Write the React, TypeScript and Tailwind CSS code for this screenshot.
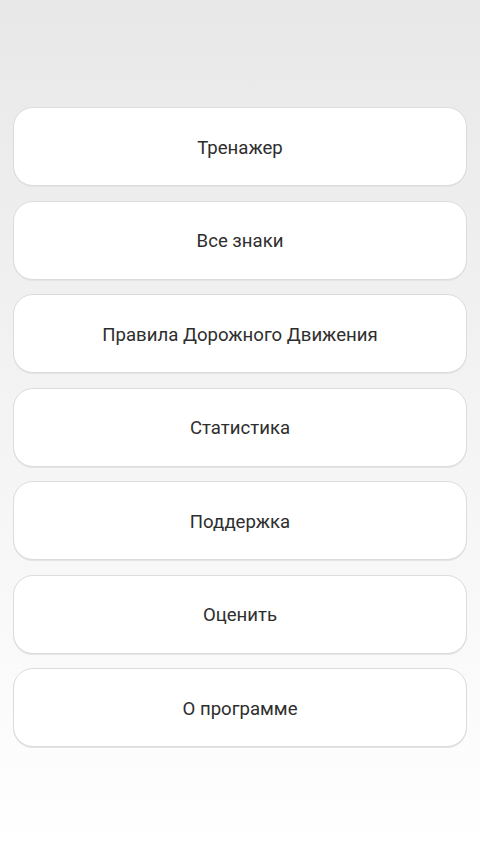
import React from "react";

const items = [
  "Тренажер",
  "Все знаки",
  "Правила Дорожного Движения",
  "Статистика",
  "Поддержка",
  "Оценить",
  "О программе",
];

export default function App() {
  return (
    <div className="min-h-[854px] w-[480px] bg-gradient-to-b from-[#e8e8e8] via-[#f4f4f4] to-white px-[13px] pt-[107px] font-['Roboto',sans-serif]">
      <div className="flex flex-col gap-[14.5px]">
        {items.map((label) => (
          <button
            key={label}
            className="flex h-[79px] w-full items-center justify-center rounded-[20px] border border-[#dcdcdc] bg-white pt-[4px] text-[18.6px] text-[#2e2e2e] shadow-[0_1px_0_#e4e4e4]"
          >
            {label}
          </button>
        ))}
      </div>
    </div>
  );
}
